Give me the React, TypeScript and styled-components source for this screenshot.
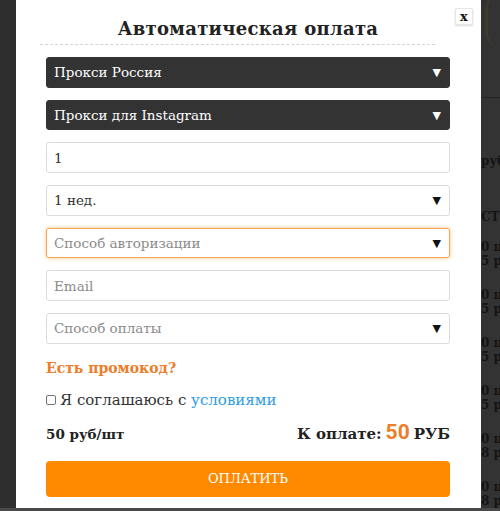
import React from 'react';
import styled, { createGlobalStyle } from 'styled-components';

const GlobalStyle = createGlobalStyle`
	html, body {
		margin: 0;
		padding: 0;
		height: 100%;
		background: #4a4a4a;
		overflow: hidden;
	}
	* {
		box-sizing: border-box;
	}
`;

const slab = `'DejaVu Serif', 'Liberation Serif', serif`;
const sans = `Roboto, 'Noto Sans', sans-serif`;

const Page = styled.div`
	display: flex;
	height: 508px;
	background: #2e2e2e;
	font-family: ${slab};
`;

const Gutter = styled.div`
	width: 16px;
	flex: none;
	background: #2e2e2e;
`;

const Modal = styled.div`
	width: 465px;
	flex: none;
	background: #fff;
	display: flex;
	flex-direction: column;
	padding: 0 31px 0 30px;
	position: relative;
`;

const Behind = styled.div`
	flex: 1;
	background: #333;
	display: flex;
	flex-direction: column;
	overflow: hidden;
	color: #141414;
	font-size: 12px;
	font-weight: bold;
	line-height: 14px;
	white-space: nowrap;
`;

const BehindLogo = styled.div`
	height: 64px;
	margin-left: 4px;
	border-left: 3px solid #3f3a2c;
	border-radius: 40px 0 0 40px;
	margin-top: -6px;
`;

const BehindRule = styled.div`
	margin-top: 50px;
	border-top: 1px solid #242424;
`;

const BehindText = styled.div<{ $gap: number }>`
	margin-top: ${p => p.$gap}px;
`;

const Title = styled.h2`
	margin: 0;
	padding-top: 18px;
	text-align: center;
	font-size: 18px;
	font-weight: bold;
	color: #222;
	line-height: 22px;
	letter-spacing: 0.3px;
`;

const Dashed = styled.div`
	margin: 4px 15px 12px -6px;
	border-top: 1px dashed #d4d4d4;
`;

const CloseButton = styled.button`
	position: absolute;
	top: 8px;
	right: 8px;
	width: 18px;
	height: 17px;
	padding: 0;
	border: 1px solid #e6e6e6;
	border-radius: 2px;
	background: #fff;
	box-shadow: 0 1px 2px rgba(0, 0, 0, 0.15);
	font-family: ${slab};
	font-size: 13px;
	font-weight: bold;
	line-height: 13px;
	color: #111;
	cursor: pointer;
`;

const Form = styled.div`
	display: flex;
	flex-direction: column;
	gap: 12px;
`;

const Field = styled.div<{ $dark?: boolean; $focus?: boolean }>`
	height: 30.7px;
	display: flex;
	align-items: center;
	justify-content: space-between;
	padding: 0 8px 0 7px;
	border-radius: 3px;
	font-size: 13.5px;
	background: ${p => (p.$dark ? '#333' : '#fff')};
	color: ${p => (p.$dark ? '#fff' : '#333')};
	border: 1px solid ${p => (p.$dark ? '#333' : p.$focus ? '#f6a552' : '#dcdcdc')};
	box-shadow: ${p => (p.$focus ? '0 0 4px rgba(246, 150, 50, 0.55)' : 'none')};
`;

const Placeholder = styled.span`
	color: #8a8a8a;
`;

const Arrow = styled.span<{ $dark?: boolean }>`
	font-size: 11px;
	font-family: 'DejaVu Sans', sans-serif;
	color: ${p => (p.$dark ? '#fff' : '#111')};
`;

const Promo = styled.div`
	margin-top: 13px;
	font-size: 14px;
	font-weight: bold;
	color: #ec7d2a;
	line-height: 22px;
`;

const Agree = styled.label`
	margin-top: 11px;
	display: flex;
	align-items: center;
	gap: 4px;
	font-size: 15px;
	color: #333;
	line-height: 20px;
`;

const Check = styled.span`
	width: 10px;
	height: 10px;
	border: 1px solid #777;
	border-radius: 2px;
	background: #fff;
	margin-top: 1px;
`;

const Link = styled.a`
	color: #2d9be6;
	text-decoration: none;
`;

const Totals = styled.div`
	margin-top: 10px;
	display: flex;
	align-items: baseline;
	justify-content: space-between;
	color: #222;
	font-weight: bold;
`;

const PerItem = styled.span`
	font-size: 13.5px;
`;

const Sum = styled.span`
	font-size: 15px;
`;

const SumValue = styled.span`
	font-family: ${sans};
	font-size: 21px;
	color: #ec7d2a;
	margin: 0 4px;
`;

const PayButton = styled.button`
	margin-top: 17px;
	height: 36px;
	width: 100%;
	border: none;
	border-radius: 4px;
	background: #ff8a00;
	color: #fff;
	font-family: ${slab};
	font-size: 13px;
	text-transform: uppercase;
	cursor: pointer;
`;

const fields = [
	{ text: 'Прокси Россия', dark: true, select: true },
	{ text: 'Прокси для Instagram', dark: true, select: true },
	{ text: '1' },
	{ text: '1 нед.', select: true },
	{ text: 'Способ авторизации', placeholder: true, select: true, focus: true },
	{ text: 'Email', placeholder: true },
	{ text: 'Способ оплаты', placeholder: true, select: true },
];

const behind = [
	{ gap: 56, text: 'руб' },
	{ gap: 42, text: 'СТ' },
	{ gap: 16, text: '0 ш' },
	{ gap: 0, text: '5 р' },
	{ gap: 20, text: '0 ш' },
	{ gap: 0, text: '5 р' },
	{ gap: 20, text: '0 ш' },
	{ gap: 0, text: '5 р' },
	{ gap: 20, text: '0 ш' },
	{ gap: 0, text: '5 р' },
	{ gap: 20, text: '0 ш' },
	{ gap: 0, text: '8 р' },
	{ gap: 20, text: '0 ш' },
	{ gap: 0, text: '8 р' },
];

export default function App() {
	return (
		<>
			<GlobalStyle />
			<Page>
				<Gutter />
				<Modal>
					<CloseButton>x</CloseButton>
					<Title>Автоматическая оплата</Title>
					<Dashed />
					<Form>
						{fields.map(f => (
							<Field key={f.text} $dark={f.dark} $focus={f.focus}>
								{f.placeholder ? <Placeholder>{f.text}</Placeholder> : <span>{f.text}</span>}
								{f.select && <Arrow $dark={f.dark}>▼</Arrow>}
							</Field>
						))}
					</Form>
					<Promo>Есть промокод?</Promo>
					<Agree>
						<Check />
						<span>Я соглашаюсь с <Link href="#">условиями</Link></span>
					</Agree>
					<Totals>
						<PerItem>50 руб/шт</PerItem>
						<Sum>К оплате:<SumValue>50</SumValue>РУБ</Sum>
					</Totals>
					<PayButton>Оплатить</PayButton>
				</Modal>
				<Behind>
					<BehindLogo />
					<BehindRule />
					{behind.map((b, i) => (
						<BehindText key={i} $gap={b.gap}>{b.text}</BehindText>
					))}
				</Behind>
			</Page>
		</>
	);
}
